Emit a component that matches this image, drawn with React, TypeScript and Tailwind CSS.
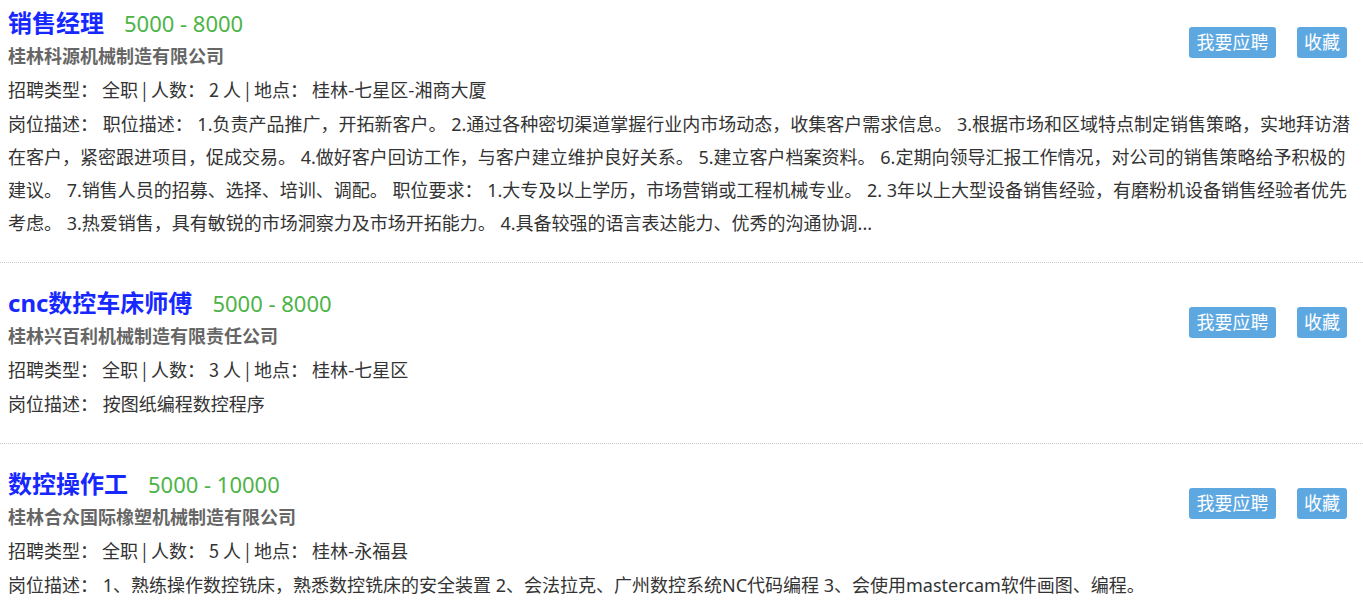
const JOBS = [
  {
    title: "销售经理",
    salary: "5000 - 8000",
    company: "桂林科源机械制造有限公司",
    count: 2,
    place: "桂林-七星区-湘商大厦",
    desc: "职位描述： 1.负责产品推广，开拓新客户。 2.通过各种密切渠道掌握行业内市场动态，收集客户需求信息。 3.根据市场和区域特点制定销售策略，实地拜访潜在客户，紧密跟进项目，促成交易。 4.做好客户回访工作，与客户建立维护良好关系。 5.建立客户档案资料。 6.定期向领导汇报工作情况，对公司的销售策略给予积极的建议。 7.销售人员的招募、选择、培训、调配。 职位要求： 1.大专及以上学历，市场营销或工程机械专业。 2. 3年以上大型设备销售经验，有磨粉机设备销售经验者优先考虑。 3.热爱销售，具有敏锐的市场洞察力及市场开拓能力。 4.具备较强的语言表达能力、优秀的沟通协调...",
  },
  {
    title: "cnc数控车床师傅",
    salary: "5000 - 8000",
    company: "桂林兴百利机械制造有限责任公司",
    count: 3,
    place: "桂林-七星区",
    desc: "按图纸编程数控程序",
  },
  {
    title: "数控操作工",
    salary: "5000 - 10000",
    company: "桂林合众国际橡塑机械制造有限公司",
    count: 5,
    place: "桂林-永福县",
    desc: "1、熟练操作数控铣床，熟悉数控铣床的安全装置 2、会法拉克、广州数控系统NC代码编程 3、会使用mastercam软件画图、编程。",
  },
];

export default function App() {
  return (
    <div className="min-h-screen bg-white font-['Noto_Sans','Noto_Sans_CJK_SC',sans-serif] text-[18px] text-[#333]">
      {JOBS.map((job, i) => (
        <div
          key={i}
          className={`px-2 pb-[22px] border-b border-dotted border-[#c8c8c8] ${i === 0 ? "pt-[6px]" : "pt-[23px]"}`}
        >
          <div className="float-right mt-[21px] mr-2 flex gap-[21px]">
            <button className="h-[31px] w-[87px] rounded-[3px] bg-[#5ea8e2] text-[18px] leading-[31px] text-white">
              我要应聘
            </button>
            <button className="h-[31px] w-[50px] rounded-[3px] bg-[#5ea8e2] text-[18px] leading-[31px] text-white">
              收藏
            </button>
          </div>
          <div className="flex items-baseline gap-[20px] leading-[34px]">
            <span className="text-[24px] font-bold text-[#1728ff]">{job.title}</span>
            <span className="text-[22px] text-[#4cb446]">{job.salary}</span>
          </div>
          <div className="leading-[33px] font-bold text-[#666]">{job.company}</div>
          <div className="leading-[33px] font-['Noto_Sans_CJK_SC',sans-serif]">
            招聘类型： 全职 | 人数： {job.count} 人 | 地点： {job.place}
          </div>
          <div className="mt-[2px] leading-[33px]">岗位描述： {job.desc}</div>
        </div>
      ))}
    </div>
  );
}
